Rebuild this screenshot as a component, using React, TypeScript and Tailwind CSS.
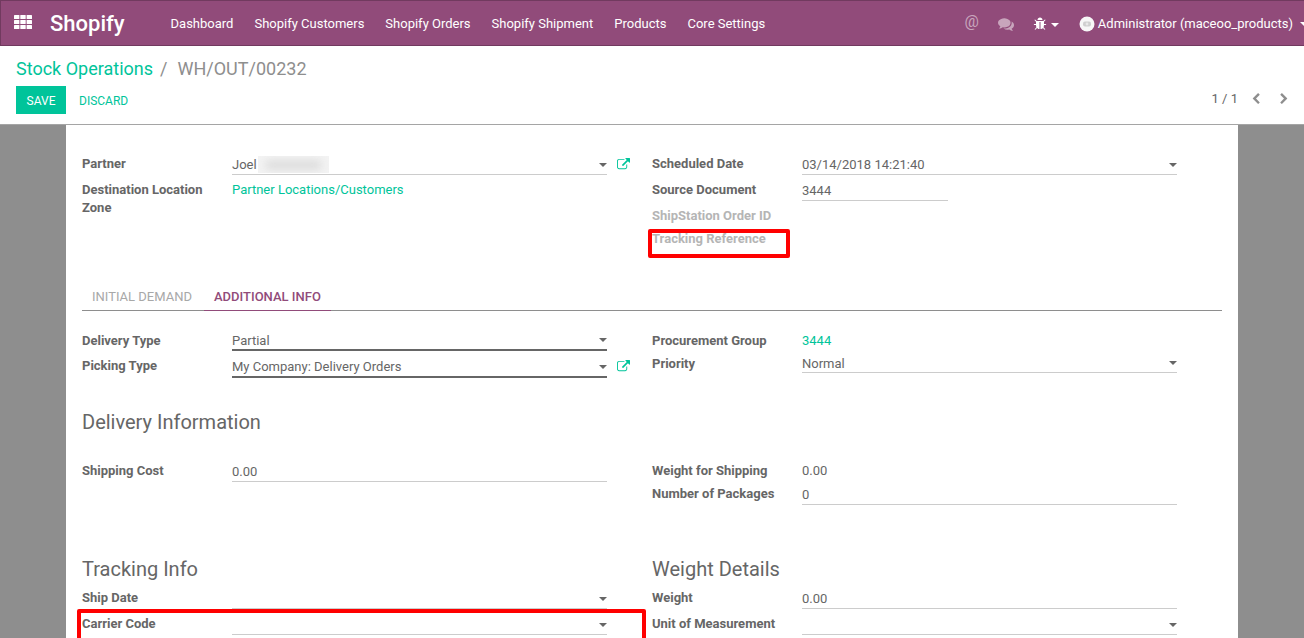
import React from "react";

const EXTERNAL =
  "M1408 928v320q0 119-84.5 203.5t-203.5 84.5h-832q-119 0-203.5-84.5t-84.5-203.5v-832q0-119 84.5-203.5t203.5-84.5h704q14 0 23 9t9 23v64q0 14-9 23t-23 9h-704q-66 0-113 47t-47 113v832q0 66 47 113t113 47h832q66 0 113-47t47-113v-320q0-14 9-23t23-9h64q14 0 23 9t9 23zm384-864v512q0 26-19 45t-45 19-45-19l-176-176-652 652q-10 10-23 10t-23-10l-114-114q-10-10-10-23t10-23l652-652-176-176q-19-19-19-45t19-45 45-19h512q26 0 45 19t19 45z";
const COMMENTS =
  "M1408 768q0 139-94 257t-256.5 186.5-353.5 68.5q-86 0-176-16-124 88-278 128-36 9-86 16h-3q-11 0-20.5-8t-11.5-21q-1-3-1-6.5t.5-6.5 2-6l2.5-5 3.5-5.5 4-5 4.5-5 4-4.5q5-6 23-25t26-29.5 22.5-29 25-38.5 20.5-44q-124-72-195-177t-71-224q0-139 94-257t256.5-186.5 353.5-68.5 353.5 68.5 256.5 186.5 94 257zm384 256q0 120-71 224.5t-195 176.5q10 24 20.5 44t25 38.5 22.5 29 26 29.5 23 25q1 1 4 4.5t4.5 5 4 5 3.5 5.5l2.5 5 2 6 .5 6.5-1 6.5q-3 14-13 22t-22 7q-50-7-86-16-154-40-278-128-90 16-176 16-271 0-472-132 58 4 88 4 161 0 309-45t264-129q125-92 192-212t67-254q0-77-23-152 129 71 204 178t75 230z";
const BUG =
  "M1696 960q0 26-19 45t-45 19h-224q0 171-67 290l208 209q19 19 19 45t-19 45q-18 19-45 19t-45-19l-198-197q-5 5-15 13t-42 28.5-65 36.5-82 29-97 13v-896h-128v896q-51 0-101.5-13.5t-87-33-66-39-43.5-32.5l-15-14-183 207q-20 21-48 21-24 0-43-16-19-18-20.5-44.5t15.5-46.5l202-227q-58-114-58-274h-224q-26 0-45-19t-19-45 19-45 45-19h224v-294l-173-173q-19-19-19-45t19-45 45-19 45 19l173 173h844l173-173q19-19 45-19t45 19 19 45-19 45l-173 173v294h224q26 0 45 19t19 45zm-480-576h-640q0-133 93.5-226.5t226.5-93.5 226.5 93.5 93.5 226.5z";
const LEFT =
  "M1427 301l-531 531 531 531q19 19 19 45t-19 45l-166 166q-19 19-45 19t-45-19l-742-742q-19-19-19-45t19-45l742-742q19-19 45-19t45 19l166 166q19 19 19 45t-19 45z";
const RIGHT =
  "M1363 877l-742 742q-19 19-45 19t-45-19l-166-166q-19-19-19-45t19-45l531-531-531-531q-19-19-19-45t19-45l166-166q19-19 45-19t45 19l742 742q19 19 19 45t-19 45z";

function Icon({ d, className }: { d: string; className: string }) {
  return (
    <svg viewBox="0 0 1792 1792" fill="currentColor" className={className} aria-hidden="true">
      <path d={d} />
    </svg>
  );
}

function Caret({ className = "" }: { className?: string }) {
  return (
    <svg viewBox="0 0 8 4" fill="currentColor" className={`h-1 w-2 ${className}`} aria-hidden="true">
      <path d="M0 0h8L4 4z" />
    </svg>
  );
}

type FieldProps = {
  id: string;
  label: string;
  value?: string;
  kind?: "text" | "picker" | "select" | "link" | "readonly" | "empty";
  strong?: boolean;
  external?: boolean;
  short?: boolean;
  masked?: boolean;
  children?: React.ReactNode;
};

function Field({ id, label, value = "", kind = "text", strong, external, short, masked, children }: FieldProps) {
  const line = strong ? "border-b-2 border-[#666666]" : "border-b border-[#cccccc]";
  const isInput = kind === "text" || kind === "picker";
  return (
    <div className="relative mb-[5px] flex items-start">
      {isInput || kind === "select" ? (
        <label htmlFor={id} className="-mb-px w-[150px] shrink-0 pt-px pr-5 font-bold">
          {label}
        </label>
      ) : (
        <span className={`-mb-px w-[150px] shrink-0 pt-px font-bold ${kind === "empty" ? "text-[#b5b5b5]" : "pr-5"}`}>
          {label}
        </span>
      )}
      {kind === "link" && (
        <a href="#" className="-mb-px pt-px text-[#00c49a]">
          {value}
        </a>
      )}
      {kind === "readonly" && <span className="-mb-px pt-px">{value}</span>}
      {isInput && (
        <div className={`relative flex items-center ${line} ${short ? "w-[146px]" : "flex-1"}`}>
          <input id={id} type="text" defaultValue={value} className="h-5 w-full min-w-0 bg-transparent outline-none" />
          {masked && (
            <span className="absolute top-0.5 left-[26px] flex h-[17px] w-[71px] items-center overflow-hidden bg-[#f3f3f3]">
              <span className="mx-2 h-2 flex-1 bg-[#d9d9d9] blur-xs" />
            </span>
          )}
          {kind === "picker" && <Caret className="mt-px shrink-0" />}
        </div>
      )}
      {kind === "select" && (
        <div className={`relative flex-1 ${line}`}>
          <select
            id={id}
            defaultValue={value}
            className="block h-[18px] w-full appearance-none bg-transparent pt-px outline-none"
          >
            <option value={value}>{value}</option>
          </select>
          <Caret className="pointer-events-none absolute top-[7px] right-0" />
        </div>
      )}
      {external && (
        <button type="button" aria-label={`Open ${label}`} className="absolute top-1 -right-[23px] text-[#00c49a]">
          <Icon d={EXTERNAL} className="size-[13px]" />
        </button>
      )}
      {children}
    </div>
  );
}

function Group({ title, children }: { title?: string; children: React.ReactNode }) {
  return (
    <section className="pr-[45px]">
      {title && <h2 className="mb-1 text-[20px] leading-[30px]">{title}</h2>}
      {children}
    </section>
  );
}

const menu = ["Dashboard", "Shopify Customers", "Shopify Orders", "Shopify Shipment", "Products", "Core Settings"];

export default function App() {
  return (
    <div className="flex h-screen flex-col overflow-hidden bg-white font-['Roboto',sans-serif] text-[13px] leading-[18px] text-[#666666]">
      <header className="flex h-[46px] shrink-0 items-center border border-r-0 border-[#713a5f] bg-[#914b7a] pt-0.5 text-white">
        <button type="button" aria-label="Applications" className="ml-[13px]">
          <svg viewBox="0 0 18 14" fill="currentColor" className="mb-1 h-[14px] w-[18px]" aria-hidden="true">
            {[0, 5, 10].map((y) =>
              [0, 6.3, 12.6].map((x) => <rect key={`${x}-${y}`} x={x} y={y} width="5.4" height="4" rx="0.6" />)
            )}
          </svg>
        </button>
        <a href="#" className="ml-[18px] text-[22px] leading-[42px] font-medium">
          Shopify
        </a>
        <nav className="ml-[46px] flex gap-[21px] whitespace-nowrap">
          {menu.map((item) => (
            <a key={item} href="#">
              {item}
            </a>
          ))}
        </nav>
        <div className="ml-auto flex items-center whitespace-nowrap">
          <button type="button" aria-label="Mentions" className="mb-1 text-[16px] text-[#c8a5bc]">
            @
          </button>
          <button type="button" aria-label="Messages" className="ml-[19px] text-[#c8a5bc]">
            <Icon d={COMMENTS} className="size-4" />
          </button>
          <button type="button" aria-label="Debug" className="ml-[19px] flex items-center gap-1">
            <Icon d={BUG} className="size-[14px]" />
            <Caret className="mt-0.5" />
          </button>
          <button type="button" className="ml-5 flex items-center">
            <svg viewBox="0 0 16 16" className="mr-[3px] size-4" aria-hidden="true">
              <circle cx="8" cy="8" r="7.5" fill="#f7f7f7" />
              <rect x="4" y="5.5" width="8" height="5" rx="2" fill="#cfcfcf" />
              <circle cx="8" cy="8" r="1.4" fill="#e8e8e8" />
            </svg>
            Administrator (maceoo_products)
            <Caret className="-mr-1 ml-[7px]" />
          </button>
        </div>
      </header>

      <div className="flex h-[79px] shrink-0 items-end justify-between border-b border-[#a5a5a5] px-4 pb-[10px]">
        <div>
          <nav aria-label="Breadcrumb" className="text-[18px] leading-[26px] text-[#8e8e8e]">
            <a href="#" className="text-[#00c49a]">
              Stock Operations
            </a>
            <span className="pr-2.5 pl-[7px]">/</span>
            <span>WH/OUT/00232</span>
          </nav>
          <div className="mt-1 flex gap-[3px] text-[12px]">
            <button type="button" className="h-7 w-[50px] bg-[#00c49a] pt-0.5 text-white">
              SAVE
            </button>
            <button type="button" className="h-7 px-2.5 pt-0.5 text-[#00c49a]">
              DISCARD
            </button>
          </div>
        </div>
        <div className="flex h-[30px] items-center">
          <span className="mr-3">1 / 1</span>
          <button type="button" aria-label="Previous" className="mr-4 text-[#8e8e8e]">
            <Icon d={LEFT} className="size-3" />
          </button>
          <button type="button" aria-label="Next" className="-mr-0.5 text-[#8e8e8e]">
            <Icon d={RIGHT} className="size-3" />
          </button>
        </div>
      </div>

      <main className="flex-1 overflow-hidden bg-[#8e8e8e] px-[66px]">
        <div className="min-h-full bg-white px-4 pt-[29px] pb-8">
          <div className="grid grid-cols-2">
            <Group>
              <Field id="partner" label="Partner" value="Joel" kind="picker" external masked />
              <Field id="destination" label="Destination Location Zone" value="Partner Locations/Customers" kind="link" />
            </Group>
            <Group>
              <Field id="scheduled" label="Scheduled Date" value="03/14/2018 14:21:40" kind="picker" />
              <Field id="source" label="Source Document" value="3444" short />
              <Field id="order-id" label="ShipStation Order ID" kind="empty" />
              <Field id="tracking-ref" label="Tracking Reference" kind="empty">
                <span className="pointer-events-none absolute top-0 -left-1 h-[29px] w-[142px] rounded-xs border-4 border-[#ff0000]" />
              </Field>
            </Group>
          </div>

          <div role="tablist" className="mt-[30px] flex border-b border-[#8e8e8e]">
            <button type="button" role="tab" aria-selected="false" className="h-7 pt-0.5 pr-3 pl-2.5 text-[#a8a8a8]">
              INITIAL DEMAND
            </button>
            <button
              type="button"
              role="tab"
              aria-selected="true"
              className="-mb-px h-[29px] border-b border-[#914b7a] px-2.5 pt-0.5 font-medium text-[#914b7a]"
            >
              ADDITIONAL INFO
            </button>
          </div>

          <div className="mt-5 grid grid-cols-2">
            <Group>
              <Field id="delivery-type" label="Delivery Type" value="Partial" kind="select" strong />
              <Field id="picking-type" label="Picking Type" value="My Company: Delivery Orders" kind="picker" strong external />
            </Group>
            <Group>
              <Field id="procurement" label="Procurement Group" value="3444" kind="link" />
              <Field id="priority" label="Priority" value="Normal" kind="select" />
            </Group>
          </div>

          <h2 className="mt-6 mb-6 text-[20px] leading-[30px]">Delivery Information</h2>

          <div className="grid grid-cols-2">
            <Group>
              <Field id="shipping-cost" label="Shipping Cost" value="0.00" />
            </Group>
            <Group>
              <Field id="shipping-weight" label="Weight for Shipping" value="0.00" kind="readonly" />
              <Field id="packages" label="Number of Packages" value="0" />
            </Group>
          </div>

          <div className="mt-11 grid grid-cols-2">
            <Group title="Tracking Info">
              <Field id="ship-date" label="Ship Date" kind="picker" />
              <Field id="carrier" label="Carrier Code" kind="picker">
                <span className="pointer-events-none absolute -top-[5px] -right-[39px] -left-[5px] h-10 rounded-xs border-4 border-[#ff0000]" />
              </Field>
            </Group>
            <Group title="Weight Details">
              <Field id="weight" label="Weight" value="0.00" />
              <Field id="unit" label="Unit of Measurement" kind="picker" />
            </Group>
          </div>
        </div>
      </main>
    </div>
  );
}
